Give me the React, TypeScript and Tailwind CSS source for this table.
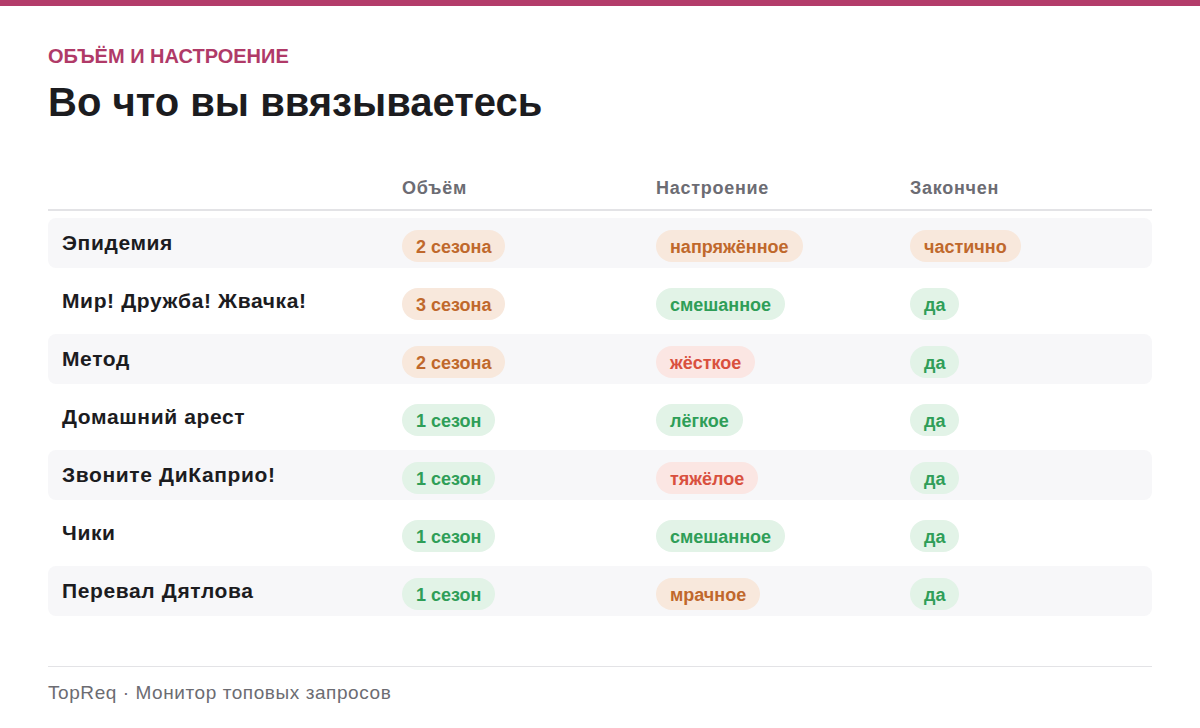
const rows = [
  { name: "Эпидемия", vol: ["2 сезона", "o"], mood: ["напряжённое", "o"], done: ["частично", "o"] },
  { name: "Мир! Дружба! Жвачка!", vol: ["3 сезона", "o"], mood: ["смешанное", "g"], done: ["да", "g"] },
  { name: "Метод", vol: ["2 сезона", "o"], mood: ["жёсткое", "r"], done: ["да", "g"] },
  { name: "Домашний арест", vol: ["1 сезон", "g"], mood: ["лёгкое", "g"], done: ["да", "g"] },
  { name: "Звоните ДиКаприо!", vol: ["1 сезон", "g"], mood: ["тяжёлое", "r"], done: ["да", "g"] },
  { name: "Чики", vol: ["1 сезон", "g"], mood: ["смешанное", "g"], done: ["да", "g"] },
  { name: "Перевал Дятлова", vol: ["1 сезон", "g"], mood: ["мрачное", "o"], done: ["да", "g"] },
];

const tones: Record<string, string> = {
  o: "bg-[#f8e8dc] text-[#c0682c]",
  g: "bg-[#e2f3e7] text-[#2f9e58]",
  r: "bg-[#fbe6e3] text-[#d9503e]",
};

function Badge({ label, tone }: { label: string; tone: string }) {
  return (
    <span className={`inline-flex h-8 items-center rounded-full px-3.5 pt-[3px] text-[18px] font-bold ${tones[tone]}`}>
      {label}
    </span>
  );
}

export default function App() {
  return (
    <div className="min-h-screen w-[1200px] bg-white font-['Liberation_Sans',Arial,sans-serif]">
      <div className="h-1.5 bg-[#b33c6a]" />

      <div className="px-12">
        {/* Heading */}
        <div className="pt-[39px] text-[20px] font-bold uppercase leading-[22px] text-[#b03a68]">
          Объём и настроение
        </div>
        <h1 className="mt-[12px] text-[40px] font-bold leading-[46px] text-[#1c1c1f]">
          Во что вы ввязываетесь
        </h1>

        {/* Table */}
        <div className="mt-[42px]">
          <div className="grid h-[44px] grid-cols-[340px_254px_254px_1fr] items-center border-b-2 border-[#e3e3e6] text-[18px] font-bold tracking-[0.04em] text-[#6c6c73]">
            <div />
            <div className="px-3.5">Объём</div>
            <div className="px-3.5">Настроение</div>
            <div className="px-3.5">Закончен</div>
          </div>

          <div className="mt-[7px] flex flex-col gap-2">
            {rows.map((r, i) => (
              <div
                key={r.name}
                className={`grid h-[50px] grid-cols-[340px_254px_254px_1fr] items-center rounded-lg ${
                  i % 2 === 0 ? "bg-[#f7f7f9]" : ""
                }`}
              >
                <div className="px-3.5 text-[21px] font-bold tracking-[0.03em] text-[#1c1c1f]">{r.name}</div>
                <div className="mt-1.5 px-3.5">
                  <Badge label={r.vol[0]} tone={r.vol[1]} />
                </div>
                <div className="mt-1.5 px-3.5">
                  <Badge label={r.mood[0]} tone={r.mood[1]} />
                </div>
                <div className="mt-1.5 px-3.5">
                  <Badge label={r.done[0]} tone={r.done[1]} />
                </div>
              </div>
            ))}
          </div>
        </div>

        {/* Footer */}
        <div className="mt-[50px] border-t border-[#e3e3e6] pt-[12px] text-[19px] tracking-[0.03em] text-[#6c6c72]">
          TopReq · Монитор топовых запросов
        </div>
      </div>
    </div>
  );
}
